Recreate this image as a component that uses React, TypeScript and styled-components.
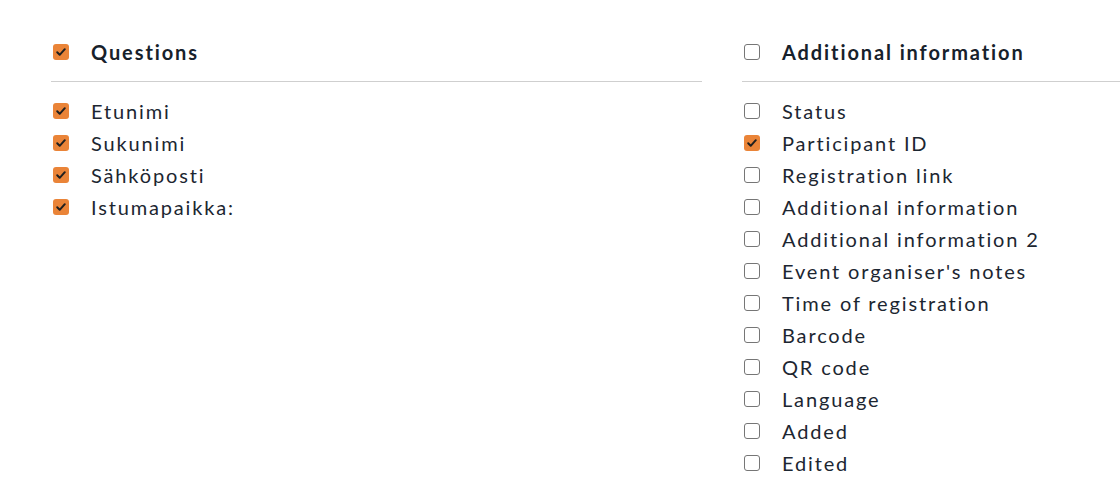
import React from "react";
import styled, { createGlobalStyle } from "styled-components";

const Global = createGlobalStyle`
  html, body { margin: 0; padding: 0; background: #ffffff; }
  body { font-family: Lato, "Noto Sans", sans-serif; color: #1c2631; overflow: hidden; }
`;

const Page = styled.div`
  display: flex;
  gap: 40px;
  padding: 36px 0 0 51px;
  width: 1400px;
`;

const Column = styled.section`
  width: 651px;
  flex: none;
`;

const Header = styled.div`
  display: flex;
  align-items: center;
  gap: 22px;
  height: 32px;
  padding: 0 0 13px 2px;
  border-bottom: 1px solid #cfcfcf;
`;

const HeaderTitle = styled.span`
  font-size: 20px;
  font-weight: 700;
  color: #17212b;
  letter-spacing: 1.9px;
`;

const List = styled.ul`
  list-style: none;
  margin: 13px 0 0;
  padding: 0 0 0 2px;
`;

const Row = styled.li`
  display: flex;
  align-items: center;
  gap: 22px;
  height: 32px;
`;

const Label = styled.span`
  font-size: 20px;
  color: #1c2631;
  letter-spacing: 1.85px;
`;

const Box = styled.span<{ $checked: boolean }>`
  width: 16px;
  height: 16px;
  box-sizing: border-box;
  border-radius: 3px;
  flex: none;
  display: flex;
  align-items: center;
  justify-content: center;
  background: ${(p) => (p.$checked ? "#ea8438" : "#ffffff")};
  border: ${(p) => (p.$checked ? "none" : "1px solid #767676")};
`;

const Check = ({ checked }: { checked: boolean }) => (
  <Box $checked={checked}>
    {checked && (
      <svg width="12" height="12" viewBox="0 0 12 12">
        <path d="M2.2 6.3 L4.7 8.8 L9.8 3.2" fill="none" stroke="#1f1f1f" strokeWidth="2" strokeLinecap="round" strokeLinejoin="round" />
      </svg>
    )}
  </Box>
);

type Item = { label: string; checked: boolean };

const questions: Item[] = [
  { label: "Etunimi", checked: true },
  { label: "Sukunimi", checked: true },
  { label: "Sähköposti", checked: true },
  { label: "Istumapaikka:", checked: true },
];

const additional: Item[] = [
  { label: "Status", checked: false },
  { label: "Participant ID", checked: true },
  { label: "Registration link", checked: false },
  { label: "Additional information", checked: false },
  { label: "Additional information 2", checked: false },
  { label: "Event organiser's notes", checked: false },
  { label: "Time of registration", checked: false },
  { label: "Barcode", checked: false },
  { label: "QR code", checked: false },
  { label: "Language", checked: false },
  { label: "Added", checked: false },
  { label: "Edited", checked: false },
];

const Group = ({ title, checked, items }: { title: string; checked: boolean; items: Item[] }) => (
  <Column>
    <Header>
      <Check checked={checked} />
      <HeaderTitle>{title}</HeaderTitle>
    </Header>
    <List>
      {items.map((it) => (
        <Row key={it.label}>
          <Check checked={it.checked} />
          <Label>{it.label}</Label>
        </Row>
      ))}
    </List>
  </Column>
);

export default function App() {
  return (
    <>
      <Global />
      <Page>
        <Group title="Questions" checked={true} items={questions} />
        <Group title="Additional information" checked={false} items={additional} />
      </Page>
    </>
  );
}
